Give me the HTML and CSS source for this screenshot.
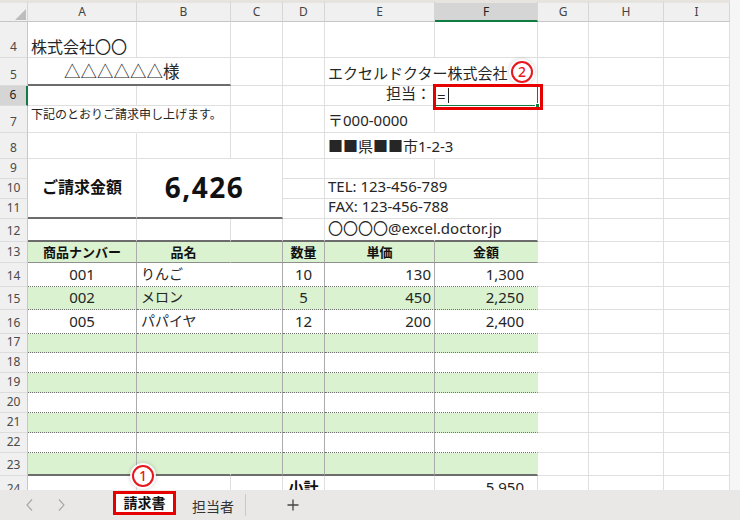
FILE: index.html
```html
<!DOCTYPE html>
<html lang="ja">
<head>
<meta charset="utf-8">
<title>請求書</title>
<link rel="stylesheet" href="styles.css">
</head>
<body>
<div class="app">
  <div class="view">
    <div class="sheet">
      <!-- header -->
      <div class="ch corner"><svg width="11" height="11" viewBox="0 0 11 11"><polygon points="11,0 11,11 0,11" fill="#bdbdbd"/></svg></div>
      <div class="ch">A</div><div class="ch">B</div><div class="ch">C</div><div class="ch">D</div><div class="ch">E</div><div class="ch csel">F</div><div class="ch">G</div><div class="ch">H</div><div class="ch">I</div>

      <!-- row 4 -->
      <div class="rn">4</div>
      <div class="f16 pb0">株式会社〇〇</div>
      <div></div><div></div><div></div><div></div><div></div><div></div><div></div><div></div>

      <!-- row 5 -->
      <div class="rn">5</div>
      <div class="span2 dk f165 ind">△△△△△△様</div>
      <div></div><div></div>
      <div class="nr">エクセルドクター株式会社</div>
      <div class="anchor"><span class="circ c2">2</span></div>
      <div></div><div></div><div></div>

      <!-- row 6 -->
      <div class="rn rsel">6</div>
      <div></div><div></div><div></div><div></div>
      <div class="r">担当：</div>
      <div class="act"><span class="eq">=</span><span class="caret"></span><span class="handle"></span><span class="redbox"></span></div>
      <div></div><div></div><div></div>

      <!-- row 7 -->
      <div class="rn">7</div>
      <div class="nr top s12">下記のとおりご請求申し上げます。</div>
      <div></div><div></div><div></div>
      <div>〒000-0000</div>
      <div></div><div></div><div></div><div></div>

      <!-- row 8 -->
      <div class="rn">8</div>
      <div></div><div></div><div></div><div></div>
      <div class="nr">■■県■■市1-2-3</div>
      <div></div><div></div><div></div><div></div>

      <!-- row 9 -->
      <div class="rn">9</div>
      <div class="rows3 dk ctr mid b16">ご請求金額</div>
      <div class="span2 rows3 dk ctr mid amt">6,426</div>
      <div></div><div></div><div></div><div></div><div></div><div></div>

      <!-- row 10 -->
      <div class="rn">10</div>
      <div></div>
      <div class="nr">TEL: 123-456-789</div>
      <div></div><div></div><div></div><div></div>

      <!-- row 11 -->
      <div class="rn">11</div>
      <div></div>
      <div class="nr">FAX: 123-456-788</div>
      <div></div><div></div><div></div><div></div>

      <!-- row 12 -->
      <div class="rn">12</div>
      <div class="dk"></div><div class="dk"></div><div class="dk"></div><div class="dk"></div>
      <div class="dk nr">〇〇〇〇@excel.doctor.jp</div>
      <div class="dk"></div>
      <div></div><div></div><div></div>

      <!-- row 13 -->
      <div class="rn">13</div>
      <div class="t g hd">商品ナンバー</div>
      <div class="t g hd nr">品名</div>
      <div class="t g hd"></div>
      <div class="t g hd">数量</div>
      <div class="t g hd">単価</div>
      <div class="t g hd nr">金額</div>
      <div></div><div></div><div></div>

      <!-- row 14 -->
      <div class="rn">14</div>
      <div class="t ctr">001</div>
      <div class="t nr nm">りんご</div>
      <div class="t"></div>
      <div class="t ctr">10</div>
      <div class="t r">130</div>
      <div class="t nr rr">1,300</div>
      <div></div><div></div><div></div>

      <!-- row 15 -->
      <div class="rn">15</div>
      <div class="t g ctr">002</div>
      <div class="t g nr nm">メロン</div>
      <div class="t g"></div>
      <div class="t g ctr">5</div>
      <div class="t g r">450</div>
      <div class="t g nr rr">2,250</div>
      <div></div><div></div><div></div>

      <!-- row 16 -->
      <div class="rn">16</div>
      <div class="t ctr">005</div>
      <div class="t nr nm">パパイヤ</div>
      <div class="t"></div>
      <div class="t ctr">12</div>
      <div class="t r">200</div>
      <div class="t nr rr">2,400</div>
      <div></div><div></div><div></div>

      <!-- row 17 -->
      <div class="rn">17</div>
      <div class="t g"></div><div class="t g nr"></div><div class="t g"></div><div class="t g"></div><div class="t g"></div><div class="t g nr"></div>
      <div></div><div></div><div></div>

      <!-- row 18 -->
      <div class="rn">18</div>
      <div class="t"></div><div class="t nr"></div><div class="t"></div><div class="t"></div><div class="t"></div><div class="t nr"></div>
      <div></div><div></div><div></div>

      <!-- row 19 -->
      <div class="rn">19</div>
      <div class="t g"></div><div class="t g nr"></div><div class="t g"></div><div class="t g"></div><div class="t g"></div><div class="t g nr"></div>
      <div></div><div></div><div></div>

      <!-- row 20 -->
      <div class="rn">20</div>
      <div class="t"></div><div class="t nr"></div><div class="t"></div><div class="t"></div><div class="t"></div><div class="t nr"></div>
      <div></div><div></div><div></div>

      <!-- row 21 -->
      <div class="rn">21</div>
      <div class="t g"></div><div class="t g nr"></div><div class="t g"></div><div class="t g"></div><div class="t g"></div><div class="t g nr"></div>
      <div></div><div></div><div></div>

      <!-- row 22 -->
      <div class="rn">22</div>
      <div class="t"></div><div class="t nr"></div><div class="t"></div><div class="t"></div><div class="t"></div><div class="t nr"></div>
      <div></div><div></div><div></div>

      <!-- row 23 -->
      <div class="rn">23</div>
      <div class="t g lst"></div><div class="t g nr lst"></div><div class="t g lst"></div><div class="t g lst"></div><div class="t g lst"></div><div class="t g nr lst"></div>
      <div></div><div></div><div></div>

      <!-- row 24 -->
      <div class="rn">24</div>
      <div></div><div></div><div></div>
      <div class="ctr bold">小計</div>
      <div></div>
      <div class="rr">5,950</div>
      <div></div><div></div><div></div>
    </div>
  </div>

  <div class="tabbar">
    <span class="nav"><svg width="12" height="12" viewBox="0 0 12 12"><polyline points="8,0.5 3,6 8,11.5" fill="none" stroke="#a8a8a8" stroke-width="1.2"/></svg></span>
    <span class="nav nav2"><svg width="12" height="12" viewBox="0 0 12 12"><polyline points="4,0.5 9,6 4,11.5" fill="none" stroke="#a8a8a8" stroke-width="1.2"/></svg></span>
    <div class="tab tab-active">請求書<span class="circ c1">1</span></div>
    <div class="tab">担当者</div>
    <span class="sep"></span>
    <span class="add"><svg width="12" height="12" viewBox="0 0 12 12"><path d="M6 0.5V11.5M0.5 6H11.5" fill="none" stroke="#444" stroke-width="1.3"/></svg></span>
  </div>
</div>
</body>
</html>
```

FILE: styles.css
```css
* { box-sizing: border-box; }
html, body { margin: 0; padding: 0; }
body {
  width: 740px;
  height: 520px;
  overflow: hidden;
  background: #f5f5f5;
  font-family: "Noto Sans", "Noto Sans CJK JP", sans-serif;
  color: #262626;
}
.app { width: 740px; height: 520px; display: flex; flex-direction: column; }
.view { height: 490px; flex: none; overflow: hidden; background: #f6f6f6; }

.sheet {
  width: 730px;
  background: #fff;
  display: grid;
  grid-template-columns: 28px 109px 94px 52px 42px 110px 103px 51px 75px 66px;
  grid-template-rows: 22px 36px 28px 20px 27px 26px 20px 20px 20px 23px 21px 24px 23px 24px 19px 20px 20px 20px 20px 20px 23px 24px;
}
:where(.sheet > div) {
  display: flex;
  align-items: flex-end;
  padding: 0 3px 2px;
  border-right: 1px solid #dfdfdf;
  border-bottom: 1px solid #dfdfdf;
  white-space: nowrap;
  font-size: 15px;
  line-height: 20px;
  min-width: 0;
}

/* headers */
.ch {
  background: #f0f0f0;
  border-top: 3px solid #e7e4e0;
  border-right-color: #d6d6d6;
  border-bottom-color: #c6c6c6;
  justify-content: center;
  align-items: center;
  padding: 0;
  font-size: 12px;
  line-height: 16px;
  color: #444;
}
.corner { justify-content: flex-end; align-items: flex-end; padding: 0 1px 1px 0; }
.csel { background: #d5d5d5; border-bottom: 2px solid #107c41; color: #222; }
.rn {
  background: #f0f0f0;
  justify-content: center;
  padding: 0 0 2px;
  font-size: 12px;
  line-height: 16px;
  color: #4a4a4a;
  border-right-color: #c6c6c6;
  border-bottom-color: #dcdcdc;
}
.rsel { background: #d5d5d5; border-right: 2px solid #107c41; color: #222; }

/* cell helpers */
.f16 { font-size: 16px; }
.f165 { font-size: 16.5px; }
.pb0 { padding-bottom: 0; }
.ind { padding-left: 36px; }
.top { align-items: flex-start; padding-top: 1px; }
.s12 { font-size: 12px; line-height: 16px; }
.r { justify-content: flex-end; }
.span2 { grid-column: span 2; }
.rows3 { grid-row: span 3; }
.ctr { justify-content: center; }
.mid { align-items: center; }
.bold { font-weight: 700; color: #111; }
.b16 { font-weight: 700; font-size: 16px; color: #111; }
.amt {
  font-size: 28px;
  font-weight: 700;
  letter-spacing: 1.5px;
  line-height: 32px;
  padding: 0 10px 3px 0;
  color: #111;
}
.dk { border-bottom: 2px solid #6c6c6c; }

/* table */
.t { border-right: 1px solid #ababab; border-bottom: 1px dotted #707070; }
.g { background: #daf2d0; }
.hd {
  border-bottom: 1px solid #8f8f8f;
  font-weight: 700;
  font-size: 13px;
  line-height: 18px;
  justify-content: center;
  padding-bottom: 1px;
  color: #111;
}
.lst { border-bottom: 2px solid #6c6c6c; }
.nr { border-right-color: transparent; }
.nm { font-size: 14px; padding-left: 4px; }
.rr { justify-content: flex-end; padding-right: 13px; }

/* active cell */
.anchor { position: relative; }
.act {
  position: relative;
  align-items: center;
  padding: 0 0 0 2px;
  border-right-color: #107c41;
  border-bottom-color: #107c41;
}
.eq { font-size: 15px; line-height: 18px; color: #222; }
.caret { display: inline-block; width: 1px; height: 15px; background: #222; margin-left: 2px; }
.handle {
  position: absolute;
  right: -3px;
  bottom: -3px;
  width: 5px;
  height: 5px;
  background: #107c41;
  border: 1px solid #fff;
}
.redbox {
  position: absolute;
  left: -2px;
  top: -2px;
  width: 110px;
  height: 26px;
  border: 3px solid #e60000;
}

/* annotation circles */
.circ {
  position: absolute;
  width: 22px;
  height: 22px;
  border-radius: 50%;
  border: 2px solid #e8161e;
  background: #fff;
  color: #e8161e;
  font-family: "Noto Sans", sans-serif;
  font-size: 14px;
  font-weight: 500;
  line-height: 18px;
  text-align: center;
  box-shadow: 0 0 0 2px rgba(255,255,255,0.9), 0 0 4px 2px rgba(0,0,0,0.18);
}
.c2 { left: 76px; top: 3px; }
.c1 { left: 16px; top: -29px; }

/* tab bar */
.tabbar {
  height: 30px;
  flex: none;
  background: #eae8e6;
  display: flex;
  align-items: center;
  padding-left: 24px;
  position: relative;
  font-family: "Noto Sans CJK JP", sans-serif;
}
.nav { width: 12px; height: 12px; display: flex; }
.nav2 { margin-left: 19px; }
.tab {
  font-size: 14px;
  color: #333;
  margin-left: 16px;
  padding-top: 2px;
  line-height: 20px;
}
.tab-active {
  position: relative;
  align-self: flex-start;
  margin-top: 1px;
  margin-left: 46px;
  width: 63px;
  height: 24px;
  padding: 0;
  border: 3px solid #e60000;
  background: #fff;
  font-weight: 700;
  color: #111;
  line-height: 17px;
  text-align: center;
}
.sep { width: 1px; height: 22px; background: #c9c9c9; margin-left: 11px; }
.add { width: 12px; height: 12px; display: flex; margin-left: 41px; }
```
